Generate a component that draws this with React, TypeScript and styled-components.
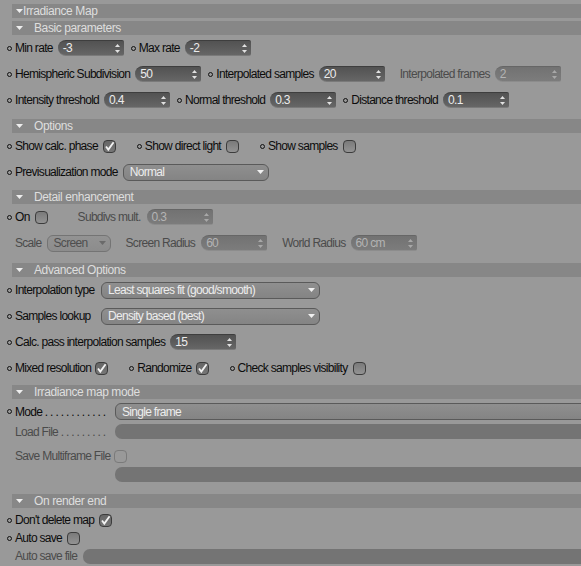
import React from "react";
import styled, { createGlobalStyle } from "styled-components";

const GlobalStyle = createGlobalStyle`
  html, body {
    margin: 0;
    padding: 0;
    background: #999999;
  }
  body {
    font-family: "Liberation Sans", Arial, sans-serif;
    font-size: 12px;
    letter-spacing: -0.7px;
  }
`;

const Panel = styled.div`
  width: 581px;
  height: 566px;
  overflow: hidden;
  background: #999999;
  padding-top: 4px;
  box-sizing: border-box;
  display: flex;
  flex-direction: column;
`;

const Header = styled.div<{ $top?: boolean }>`
  flex: none;
  height: 14px;
  margin-left: 12px;
  padding-left: 4px;
  background: #878787;
  color: #dedede;
  display: flex;
  align-items: center;
  gap: ${p => (p.$top ? 0 : 11)}px;
  line-height: 14px;
  white-space: nowrap;
  letter-spacing: -0.4px;
  & + & {
    margin-top: 3px;
  }
`;

const Body = styled.div<{ $pt?: number; $pb?: number }>`
  flex: none;
  display: flex;
  flex-direction: column;
  padding-top: ${p => p.$pt ?? 0}px;
  padding-bottom: ${p => p.$pb ?? 6}px;
`;

const Row = styled.div<{ $h?: number; $gap?: number; $end?: boolean; $pb?: number }>`
  flex: none;
  height: ${p => p.$h ?? 26}px;
  box-sizing: border-box;
  padding-left: 7px;
  padding-bottom: ${p => p.$pb ?? 0}px;
  display: flex;
  align-items: ${p => (p.$end ? "flex-end" : "center")};
  gap: ${p => p.$gap ?? 7}px;
  white-space: nowrap;
`;

const Group = styled.div<{ $grow?: boolean; $gap?: number }>`
  display: flex;
  align-items: center;
  gap: ${p => p.$gap ?? 5}px;
  flex: ${p => (p.$grow ? "1" : "none")};
  min-width: 0;
`;

const Label = styled.span<{ $dot?: boolean; $dim?: boolean; $w?: number }>`
  flex: none;
  display: inline-flex;
  align-items: center;
  line-height: 14px;
  color: ${p => (p.$dim ? "#4b4b4b" : "#0c0c0c")};
  min-width: ${p => (p.$w ? `${p.$w}px` : "auto")};
  &::before {
    content: "";
    flex: none;
    width: 5px;
    height: 5px;
    box-sizing: border-box;
    border: 1px solid #111;
    border-radius: 50%;
    margin-right: 3px;
    visibility: ${p => (p.$dot ? "visible" : "hidden")};
  }
`;

const NumBox = styled.div<{ $off?: boolean; $w?: number }>`
  flex: none;
  width: ${p => p.$w ?? 66}px;
  height: 16px;
  box-sizing: border-box;
  border-radius: 8px 2px 2px 8px;
  border-top: 1px solid ${p => (p.$off ? "#666" : "#3e3e3e")};
  border-bottom: 1px solid ${p => (p.$off ? "#8c8c8c" : "#7a7a7a")};
  background: ${p =>
    p.$off
      ? "linear-gradient(#727272, #7c7c7c)"
      : "linear-gradient(#525252, #666666)"};
  color: ${p => (p.$off ? "#b4b4b4" : "#ececec")};
  padding: 0 4px 0 5px;
  display: flex;
  align-items: center;
  justify-content: space-between;
  line-height: 14px;
`;

const SelectBox = styled.div<{ $w?: number; $grow?: boolean; $off?: boolean }>`
  flex: ${p => (p.$grow ? "1" : "none")};
  width: ${p => (p.$grow ? "auto" : `${p.$w ?? 100}px`)};
  margin-right: ${p => (p.$grow ? "-10px" : "0")};
  height: 17px;
  box-sizing: border-box;
  border: 1px solid ${p => (p.$off ? "#747474" : "#5a5a5a")};
  border-radius: 6px;
  background: ${p =>
    p.$off
      ? "linear-gradient(#939393, #8c8c8c)"
      : "linear-gradient(#8f8f8f, #848484)"};
  color: ${p => (p.$off ? "#4e4e4e" : "#ededed")};
  padding: 0 4px 0 6px;
  display: flex;
  align-items: center;
  justify-content: space-between;
  line-height: 14px;
`;

const FileBox = styled.div<{ $ml?: number }>`
  flex: 1;
  height: 15px;
  margin-left: ${p => p.$ml ?? 0}px;
  margin-right: -10px;
  border-radius: 7px 0 0 7px;
  background: #747474;
`;

const CheckBox = styled.span<{ $on?: boolean; $off?: boolean }>`
  flex: none;
  width: 13px;
  height: 13px;
  box-sizing: border-box;
  border-radius: 4px;
  border: 1px solid ${p => (p.$off ? "#7a7a7a" : "#3c3c3c")};
  background: ${p =>
    p.$off
      ? "#999"
      : p.$on
      ? "linear-gradient(#666, #777)"
      : "linear-gradient(#7a7a7a, #939393)"};
  display: inline-flex;
  align-items: center;
  justify-content: center;
`;

const Tri = ({ color = "#eeeeee" }: { color?: string }) => (
  <svg width="7" height="4" viewBox="0 0 7 4">
    <polygon points="0,0 7,0 3.5,4" fill={color} />
  </svg>
);

const Spinner = ({ off }: { off?: boolean }) => (
  <svg width="5" height="9" viewBox="0 0 5 9">
    <polygon points="2.5,0 5,3 0,3" fill={off ? "#a8a8a8" : "#e2e2e2"} />
    <polygon points="0,6 5,6 2.5,9" fill={off ? "#a8a8a8" : "#e2e2e2"} />
  </svg>
);

const Tick = () => (
  <svg width="11" height="11" viewBox="0 0 11 11">
    <path d="M2 5.5 L4.3 8.6 L9.6 1.2" fill="none" stroke="#f2f2f2" strokeWidth="1.8" />
  </svg>
);

function NumField({ value, off, w }: { value: string; off?: boolean; w?: number }) {
  return (
    <NumBox $off={off} $w={w}>
      <span>{value}</span>
      <Spinner off={off} />
    </NumBox>
  );
}

function Select({ value, w, grow, off }: { value: string; w?: number; grow?: boolean; off?: boolean }) {
  return (
    <SelectBox $w={w} $grow={grow} $off={off}>
      <span>{value}</span>
      {!grow && <Tri color={off ? "#6a6a6a" : "#f0f0f0"} />}
    </SelectBox>
  );
}

function Check({ on, off }: { on?: boolean; off?: boolean }) {
  return <CheckBox $on={on} $off={off}>{on && <Tick />}</CheckBox>;
}

export default function App() {
  return (
    <>
      <GlobalStyle />
      <Panel>
        <Header $top>
          <Tri />
          Irradiance Map
        </Header>
        <Header>
          <Tri />
          Basic parameters
        </Header>
        <Body>
          <Row>
            <Group>
              <Label $dot>Min rate</Label>
              <NumField value="-3" />
            </Group>
            <Group>
              <Label $dot>Max rate</Label>
              <NumField value="-2" />
            </Group>
          </Row>
          <Row>
            <Group>
              <Label $dot>Hemispheric Subdivision</Label>
              <NumField value="50" />
            </Group>
            <Group>
              <Label $dot>Interpolated samples</Label>
              <NumField value="20" />
            </Group>
            <Group>
              <Label $dim>Interpolated frames</Label>
              <NumField value="2" off />
            </Group>
          </Row>
          <Row>
            <Group>
              <Label $dot>Intensity threshold</Label>
              <NumField value="0.4" />
            </Group>
            <Group>
              <Label $dot>Normal threshold</Label>
              <NumField value="0.3" />
            </Group>
            <Group>
              <Label $dot>Distance threshold</Label>
              <NumField value="0.1" />
            </Group>
          </Row>
        </Body>

        <Header>
          <Tri />
          Options
        </Header>
        <Body $pb={5}>
          <Row $gap={21}>
            <Group>
              <Label $dot>Show calc. phase</Label>
              <Check on />
            </Group>
            <Group>
              <Label $dot>Show direct light</Label>
              <Check />
            </Group>
            <Group>
              <Label $dot>Show samples</Label>
              <Check />
            </Group>
          </Row>
          <Row>
            <Group>
              <Label $dot>Previsualization mode</Label>
              <Select value="Normal" w={146} />
            </Group>
          </Row>
        </Body>

        <Header>
          <Tri />
          Detail enhancement
        </Header>
        <Body $pb={7}>
          <Row $gap={22}>
            <Group>
              <Label $dot>On</Label>
              <Check />
            </Group>
            <Group $gap={6}>
              <Label $dim>Subdivs mult.</Label>
              <NumField value="0.3" off />
            </Group>
          </Row>
          <Row>
            <Group>
              <Label $dim>Scale</Label>
              <Select value="Screen" w={64} off />
            </Group>
            <Group $gap={6}>
              <Label $dim>Screen Radius</Label>
              <NumField value="60" off />
            </Group>
            <Group>
              <Label $dim>World Radius</Label>
              <NumField value="60 cm" off />
            </Group>
          </Row>
        </Body>

        <Header>
          <Tri />
          Advanced Options
        </Header>
        <Body $pb={4}>
          <Row>
            <Group>
              <Label $dot $w={89}>Interpolation type</Label>
              <Select value="Least squares fit (good/smooth)" w={219} />
            </Group>
          </Row>
          <Row>
            <Group>
              <Label $dot $w={89}>Samples lookup</Label>
              <Select value="Density based (best)" w={219} />
            </Group>
          </Row>
          <Row>
            <Group>
              <Label $dot>Calc. pass interpolation samples</Label>
              <NumField value="15" />
            </Group>
          </Row>
          <Row $gap={21}>
            <Group $gap={4}>
              <Label $dot>Mixed resolution</Label>
              <Check on />
            </Group>
            <Group $gap={4}>
              <Label $dot>Randomize</Label>
              <Check on />
            </Group>
            <Group>
              <Label $dot>Check samples visibility</Label>
              <Check />
            </Group>
          </Row>
        </Body>

        <Header>
          <Tri />
          Irradiance map mode
        </Header>
        <Body $pb={12}>
          <Row $h={25}>
            <Group $grow>
              <Label $dot $w={103}>Mode . . . . . . . . . . . .</Label>
              <Select value="Single frame" grow />
            </Group>
          </Row>
          <Row $h={15}>
            <Group $grow>
              <Label $dim $w={103}>Load File . . . . . . . . .</Label>
              <FileBox />
            </Group>
          </Row>
          <Row $h={27} $end $pb={3}>
            <Group $gap={4}>
              <Label $dim>Save Multiframe File</Label>
              <Check off />
            </Group>
          </Row>
          <Row $h={16} $end>
            <FileBox $ml={108} />
          </Row>
        </Body>

        <Header>
          <Tri />
          On render end
        </Header>
        <Body $pt={3} $pb={0}>
          <Row $h={18}>
            <Group>
              <Label $dot>Don't delete map</Label>
              <Check on />
            </Group>
          </Row>
          <Row $h={18}>
            <Group>
              <Label $dot>Auto save</Label>
              <Check />
            </Group>
          </Row>
          <Row $h={18}>
            <Group $grow $gap={6}>
              <Label $dim>Auto save file</Label>
              <FileBox />
            </Group>
          </Row>
        </Body>
      </Panel>
    </>
  );
}
